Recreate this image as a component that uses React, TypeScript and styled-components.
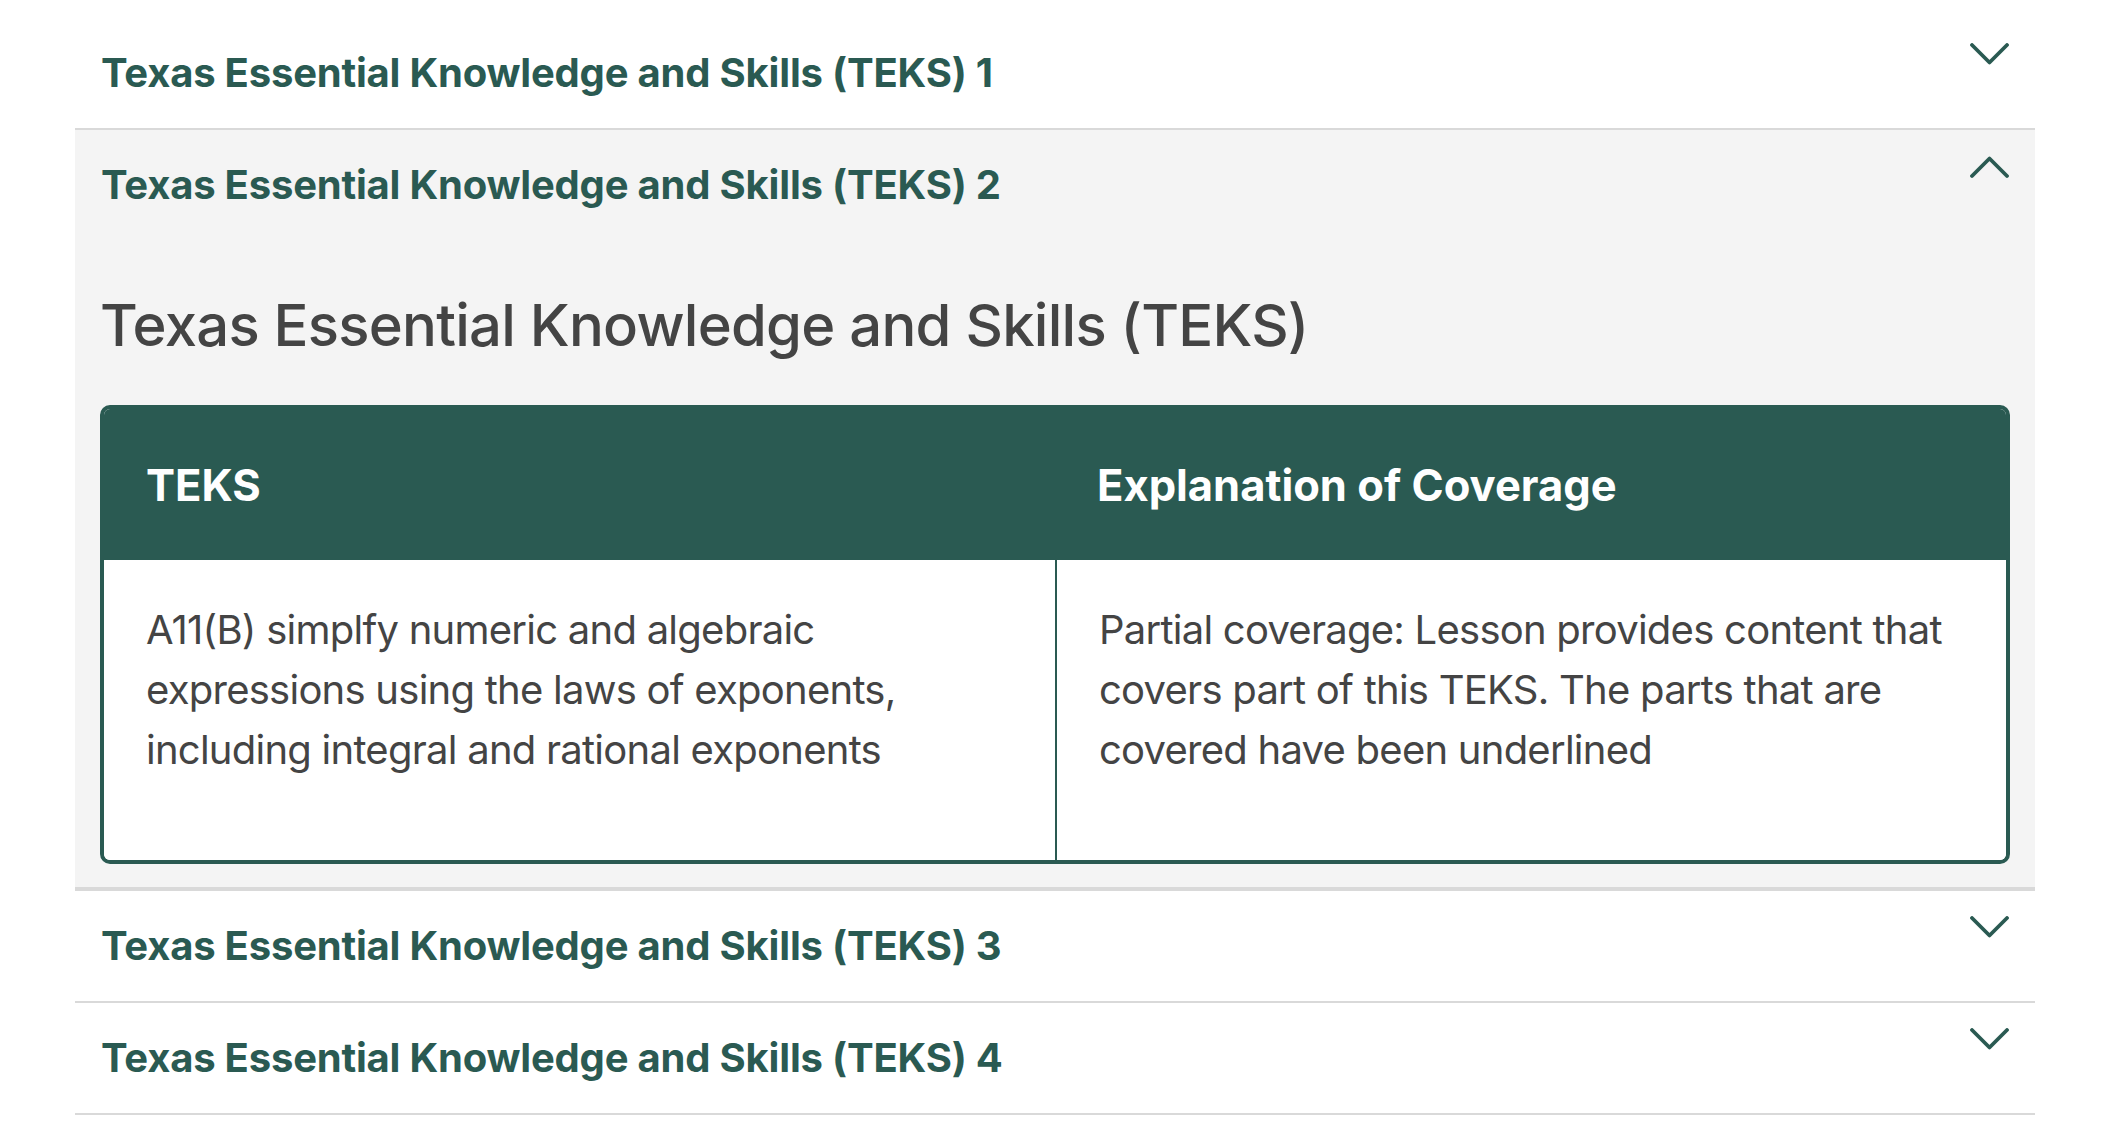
import React, { useState } from "react";
import styled, { createGlobalStyle } from "styled-components";

const GREEN = "#2a5a52";

const GlobalStyle = createGlobalStyle`
  html, body {
    margin: 0;
    padding: 0;
    background: #ffffff;
  }
  body {
    font-family: Inter, "Noto Sans", "Liberation Sans", sans-serif;
    -webkit-font-smoothing: antialiased;
  }
`;

const Page = styled.div`
  padding: 18px 69px 40px 75px;
`;

const Accordion = styled.div`
  display: flex;
  flex-direction: column;
`;

const Item = styled.section<{ $open: boolean }>`
  background: ${(p) => (p.$open ? "#f4f4f4" : "#ffffff")};
  border-bottom: ${(p) => (p.$open ? "4px" : "2px")} solid #d9d9d9;
`;

const Trigger = styled.button`
  display: flex;
  width: 100%;
  align-items: flex-start;
  justify-content: space-between;
  padding: 25px 26px;
  margin: 0;
  border: 0;
  background: transparent;
  cursor: pointer;
  text-align: left;
  font-family: Inter, "Noto Sans", "Liberation Sans", sans-serif;
  font-weight: 650;
  font-size: 40px;
  line-height: 60px;
  letter-spacing: -0.2px;
  color: ${GREEN};
`;

const ChevronIcon = styled.svg`
  flex: none;
  width: 39px;
  height: 24px;
`;

const Panel = styled.div`
  padding: 51px 25px 23px;
`;

const Heading = styled.h2`
  margin: 0 0 44px;
  font-family: Inter, "Noto Sans", "Liberation Sans", sans-serif;
  font-weight: 500;
  font-size: 58px;
  line-height: 1.2;
  letter-spacing: -0.75px;
  color: #444444;
`;

const Card = styled.div`
  border: 4px solid ${GREEN};
  border-radius: 10px;
  overflow: hidden;
  display: grid;
  grid-template-columns: 1fr 1fr;
  background: #ffffff;
`;

const HeadCell = styled.div`
  background: ${GREEN};
  color: #ffffff;
  font-weight: 700;
  font-size: 43.5px;
  line-height: 63px;
  padding: 45px 42px 43px;
`;

const BodyCell = styled.div<{ $divider?: boolean }>`
  background: #ffffff;
  color: #444444;
  font-weight: 400;
  font-size: 40px;
  line-height: 60px;
  letter-spacing: -0.75px;
  padding: 40px 42px 80px;
  border-left: ${(p) => (p.$divider ? `2px solid ${GREEN}` : "0")};
`;

const Chevron = ({ up }: { up: boolean }) => (
  <ChevronIcon viewBox="0 0 39 24" fill="none" aria-hidden="true">
    <polyline
      points={up ? "2,21 19.5,3.5 37,21" : "2,2 19.5,19.5 37,2"}
      stroke={GREEN}
      strokeWidth="3.8"
      strokeLinecap="round"
      strokeLinejoin="round"
    />
  </ChevronIcon>
);

const items = [1, 2, 3, 4];

export default function App() {
  const [open, setOpen] = useState<number | null>(2);
  return (
    <>
      <GlobalStyle />
      <Page>
        <Accordion>
          {items.map((n) => {
            const isOpen = open === n;
            return (
              <Item key={n} $open={isOpen}>
                <Trigger onClick={() => setOpen(isOpen ? null : n)}>
                  <span>Texas Essential Knowledge and Skills (TEKS) {n}</span>
                  <Chevron up={isOpen} />
                </Trigger>
                {isOpen && (
                  <Panel>
                    <Heading>Texas Essential Knowledge and Skills (TEKS)</Heading>
                    <Card>
                      <HeadCell>TEKS</HeadCell>
                      <HeadCell>Explanation of Coverage</HeadCell>
                      <BodyCell>
                        A11(B) simplfy numeric and algebraic expressions using the laws of
                        exponents, including integral and rational exponents
                      </BodyCell>
                      <BodyCell $divider>
                        Partial coverage: Lesson provides content that covers part of this
                        TEKS. The parts that are covered have been underlined
                      </BodyCell>
                    </Card>
                  </Panel>
                )}
              </Item>
            );
          })}
        </Accordion>
      </Page>
    </>
  );
}
